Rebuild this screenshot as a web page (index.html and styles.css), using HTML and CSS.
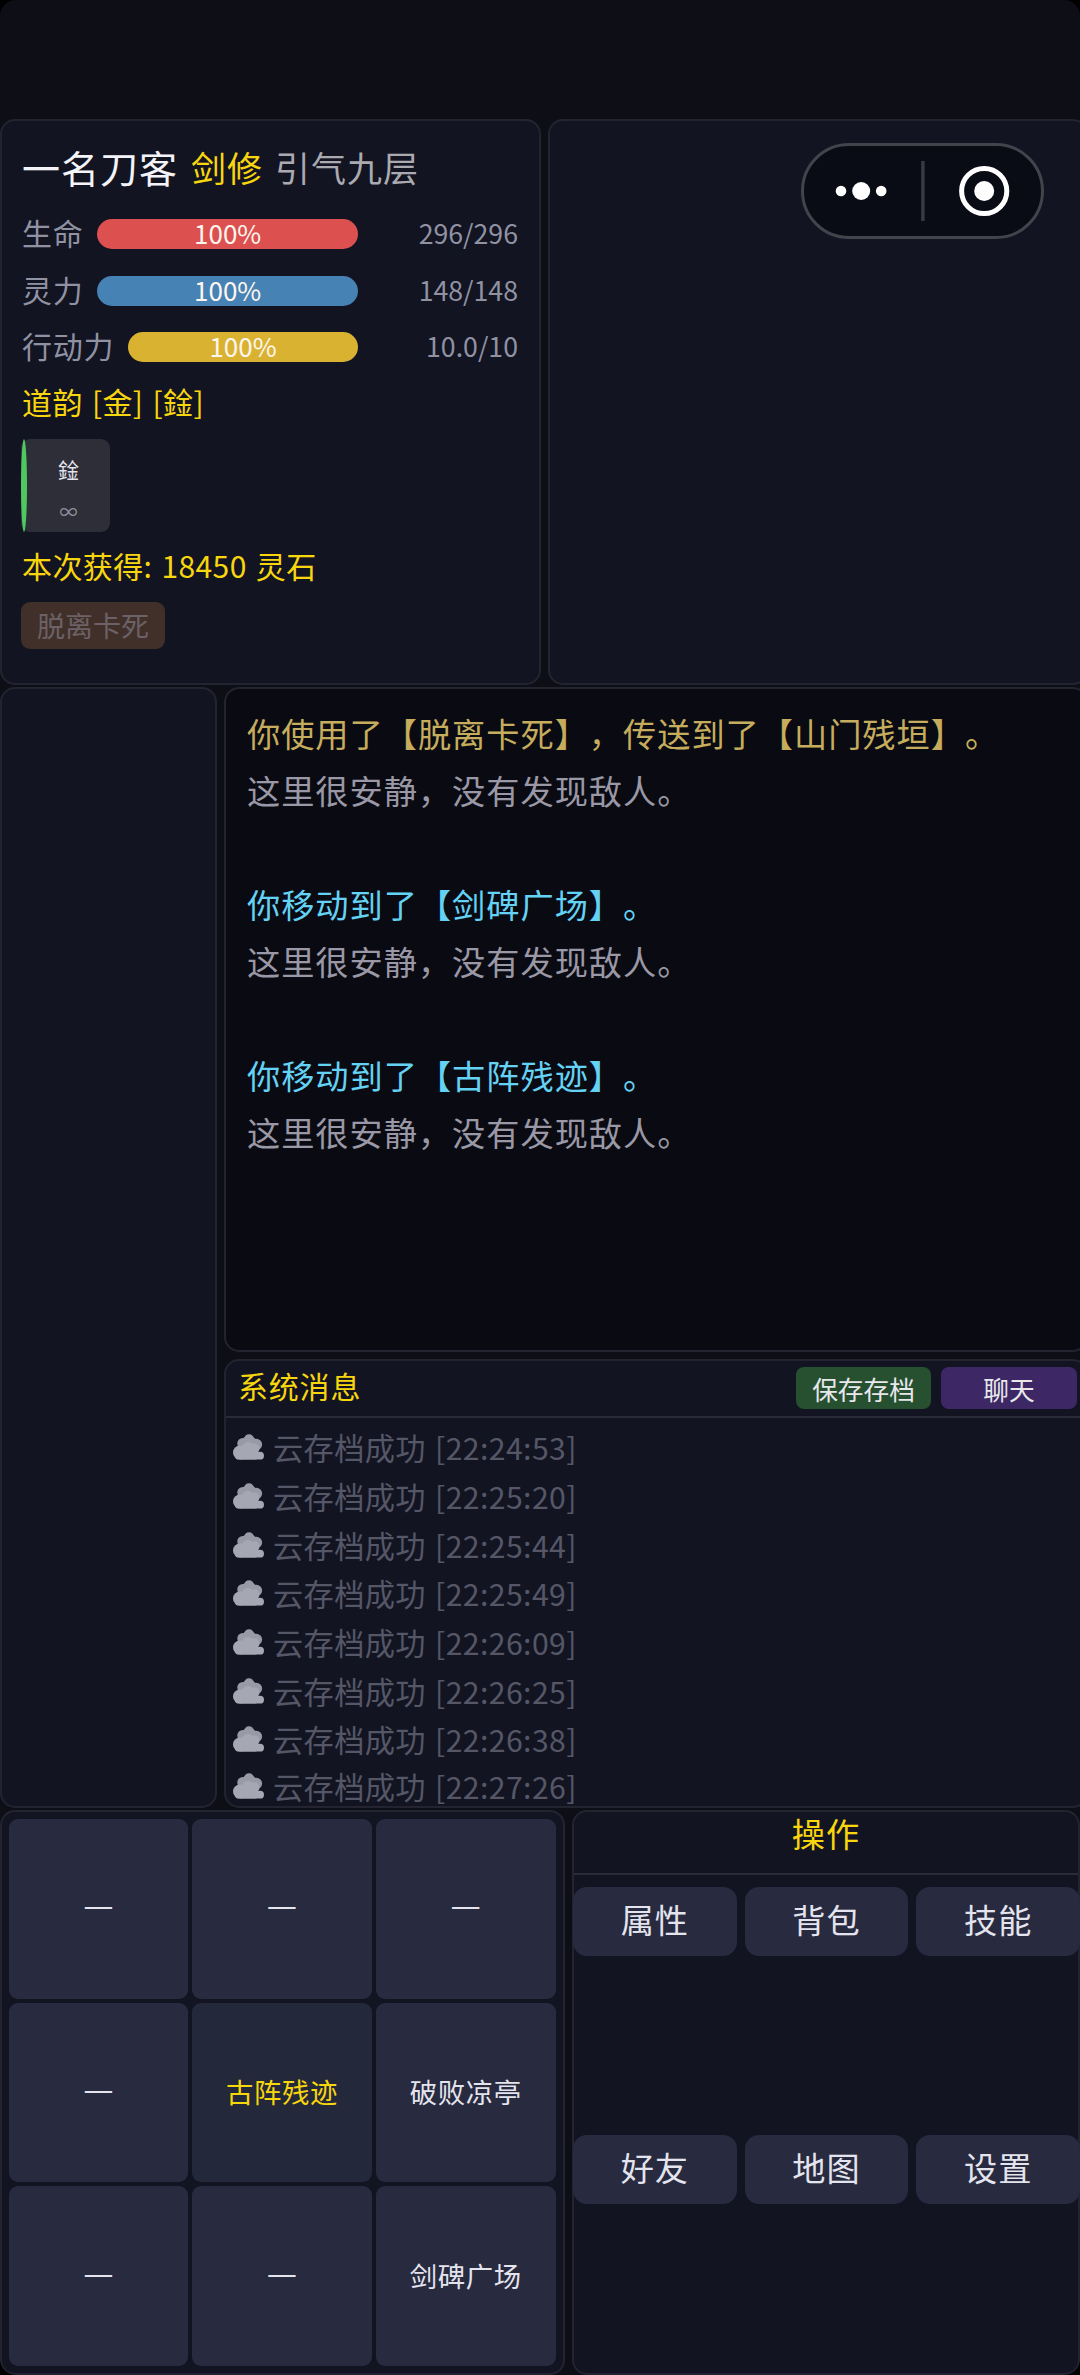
FILE: index.html
```html
<!DOCTYPE html>
<html lang="zh-CN">
<head>
<meta charset="utf-8">
<title>古阵残迹</title>
<link rel="stylesheet" href="styles.css">
</head>
<body>
<svg class="defs" aria-hidden="true">
  <symbol id="cloud" viewBox="0 0 31 26">
    <g fill="#989ba6"><circle cx="9.8" cy="9.5" r="5.5"/><circle cx="16" cy="5.2" r="5"/><circle cx="23.3" cy="10.5" r="5.8"/><circle cx="16" cy="10" r="8"/></g>
    <g fill="#a5a8b2"><circle cx="15" cy="14.5" r="6.5"/><circle cx="7" cy="18.5" r="7"/><circle cx="21.5" cy="14.5" r="5"/><rect x="5" y="13" width="20" height="12.5" rx="3"/><rect x="2" y="17.8" width="29" height="7.8" rx="3.9"/></g>
  </symbol>
</svg>
<div class="screen">
  <div class="row top-row">
    <section class="panel status">
      <div class="title"><span class="name">一名刀客</span><span class="job">剑修</span><span class="realm">引气九层</span></div>
      <div class="stat"><span class="label">生命</span><div class="bar hp">100%</div><span class="value">296/296</span></div>
      <div class="stat"><span class="label">灵力</span><div class="bar mp">100%</div><span class="value">148/148</span></div>
      <div class="stat"><span class="label">行动力</span><div class="bar ap">100%</div><span class="value">10.0/10</span></div>
      <div class="gold-line">道韵 [金] [鍂]</div>
      <div class="buff"><i class="buff-edge"></i><div class="buff-body"><span class="buff-name">鍂</span><span class="buff-time">∞</span></div></div>
      <div class="gold-line gain">本次获得: 18450 灵石</div>
      <button class="escape">脱离卡死</button>
    </section>
    <section class="panel enemy"></section>
  </div>
  <div class="row mid-row">
    <aside class="panel side"></aside>
    <div class="feed">
      <section class="panel log">
        <p class="use">你使用了【脱离卡死】，传送到了【山门残垣】。</p>
        <p>这里很安静，没有发现敌人。</p>
        <p class="blank"></p>
        <p class="move">你移动到了【剑碑广场】。</p>
        <p>这里很安静，没有发现敌人。</p>
        <p class="blank"></p>
        <p class="move">你移动到了【古阵残迹】。</p>
        <p>这里很安静，没有发现敌人。</p>
      </section>
      <section class="panel system">
        <header class="sys-head"><span class="sys-title">系统消息</span><button class="mini save">保存存档</button><button class="mini chat">聊天</button></header>
        <ul class="messages">
          <li><svg class="cloud"><use href="#cloud"/></svg>云存档成功 [22:24:53]</li>
          <li><svg class="cloud"><use href="#cloud"/></svg>云存档成功 [22:25:20]</li>
          <li><svg class="cloud"><use href="#cloud"/></svg>云存档成功 [22:25:44]</li>
          <li><svg class="cloud"><use href="#cloud"/></svg>云存档成功 [22:25:49]</li>
          <li><svg class="cloud"><use href="#cloud"/></svg>云存档成功 [22:26:09]</li>
          <li><svg class="cloud"><use href="#cloud"/></svg>云存档成功 [22:26:25]</li>
          <li><svg class="cloud"><use href="#cloud"/></svg>云存档成功 [22:26:38]</li>
          <li><svg class="cloud"><use href="#cloud"/></svg>云存档成功 [22:27:26]</li>
        </ul>
      </section>
    </div>
  </div>
  <div class="row bottom-row">
    <section class="panel map">
      <div class="cell empty">—</div><div class="cell empty">—</div><div class="cell empty">—</div>
      <div class="cell empty">—</div><div class="cell current">古阵残迹</div><div class="cell">破败凉亭</div>
      <div class="cell empty">—</div><div class="cell empty">—</div><div class="cell">剑碑广场</div>
    </section>
    <section class="panel ops">
      <h2 class="ops-title">操作</h2>
      <div class="ops-grid">
        <button class="op">属性</button><button class="op">背包</button><button class="op">技能</button>
        <button class="op">好友</button><button class="op">地图</button><button class="op">设置</button>
      </div>
    </section>
  </div>
  <svg class="capsule" viewBox="0 0 243 96">
    <rect x="1.5" y="1.5" width="240" height="93" rx="46.5" fill="#090c15" stroke="#42434b" stroke-width="3"/>
    <g fill="#fff"><circle cx="40" cy="48" r="5.3"/><circle cx="60.2" cy="48" r="9"/><circle cx="80.2" cy="48" r="5.3"/><circle cx="183.2" cy="48" r="10"/></g>
    <rect x="120.2" y="18" width="3.4" height="60" fill="#393b44"/>
    <circle cx="183.2" cy="48" r="22.6" fill="none" stroke="#fff" stroke-width="5"/>
  </svg>
</div>
</body>
</html>
```
FILE: styles.css
```css
* { box-sizing: border-box; }
html { background: #000; }
body { margin: 0; font-family: "Noto Sans CJK SC", "Noto Sans CJK TC", sans-serif; color: #e4e4ee; text-spacing-trim: space-all; }
button { border: 0; padding: 0; font-family: inherit; color: inherit; }
p, h2, ul { margin: 0; padding: 0; font-weight: 400; }
.defs { display: none; }
.screen { position: relative; width: 1080px; height: 2375px; padding-top: 119px; overflow: hidden; background: #0e0e16; border-radius: 16px; }
.row { display: flex; }
.panel { background: #121422; border: 2px solid #23242f; border-radius: 15px; }

/* character status */
.top-row { width: 1088px; height: 566px; gap: 7px; margin-bottom: 2px; }
.status { width: 541px; padding: 19px 20px 0 19px; }
.enemy { flex: 1; }
.title { display: flex; align-items: center; gap: 13px; height: 54px; padding-left: 1px; white-space: nowrap; }
.name { font-size: 38px; letter-spacing: 1px; line-height: 54px; color: #f4f4f8; }
.job { font-size: 35px; letter-spacing: 1px; line-height: 54px; color: #f8d60e; }
.realm { font-size: 35px; letter-spacing: 1px; line-height: 54px; color: #aaaab0; margin-left: -1px; }
.stat { display: flex; align-items: center; height: 56.7px; }
.title + .stat { margin-top: 11.5px; }
.label { font-size: 30px; letter-spacing: .7px; line-height: 48px; color: #9092a2; margin-right: 14px; padding: 0 0 4px 1px; }
.bar { flex: 1; height: 30px; border-radius: 15px; font-size: 26px; line-height: 28px; text-align: center; color: #fdf6ee; }
.hp { background: #dc504f; }
.mp { background: #4682b4; }
.ap { background: #dab232; }
.value { width: 161px; padding: 0 1px 2px 0; font-size: 26.7px; line-height: 40px; text-align: right; color: #9092a2; }
.gold-line { padding-left: 1px; font-size: 30px; letter-spacing: .4px; word-spacing: 2px; line-height: 46px; height: 46px; color: #f8d60e; margin-top: 2.5px; }
.buff { display: flex; width: 89px; height: 93px; margin-top: 15px; border-radius: 9px; background: #2e2e38; }
.buff-edge { width: 6px; border-radius: 50%; background: #50c860; }
.buff-body { flex: 1; display: flex; flex-direction: column; align-items: center; }
.buff-name { font-size: 21px; line-height: 30px; margin-top: 15px; color: #e4e4ee; }
.buff-time { font-size: 18px; line-height: 20px; margin-top: 17px; color: #8e8e9c; }
.gain { margin-top: 10px; }
.escape { display: block; margin-top: 14px; width: 144px; height: 47px; border-radius: 9px; background: #413029; color: #6b6167; font-size: 28px; line-height: 43px; }

/* adventure log and system messages */
.mid-row { width: 1088px; height: 1121px; gap: 7px; margin-bottom: 2px; }
.side { width: 217px; }
.feed { flex: 1; display: flex; flex-direction: column; gap: 7px; }
.log { height: 665px; flex: none; background: #0a0b12; padding: 14.5px 20px 0 21px; }
.log p { height: 57.1px; font-size: 33.2px; letter-spacing: 1px; line-height: 57px; color: #9a98a6; white-space: nowrap; }
.log p.use { color: #c6ad5e; }
.log p.move { color: #64d2f4; }
.system { flex: 1; min-height: 0; }
.sys-head { display: flex; align-items: center; gap: 10px; height: 57px; padding: 0 9px 1px 12px; border-bottom: 2px solid #2a2b38; }
.sys-title { flex: 1; padding-bottom: 7px; font-size: 30px; letter-spacing: .8px; line-height: 44px; color: #f8d60e; }
.mini { width: 136px; height: 42px; border-radius: 8px; font-size: 25.7px; line-height: 37px; color: #e8e8ec; }
.save { width: 135px; background: #275030; }
.chat { background: #3d2865; }
.messages { list-style: none; padding: 5px 0 0 7px; }
.messages li { display: flex; align-items: center; height: 48.7px; font-size: 30.2px; letter-spacing: .4px; word-spacing: 2px; line-height: 30px; color: #555767; white-space: pre; }
.messages li:last-child { height: 44px; padding-bottom: 0; }
.cloud { width: 31px; height: 26px; margin-right: 9px; }

/* map and actions */
.bottom-row { width: 1080px; height: 565px; gap: 7px; }
.map { width: 565px; padding: 7px 7.5px 7px 6.5px; display: grid; grid-template-columns: repeat(3, 1fr); grid-template-rows: repeat(3, 1fr); gap: 4px; }
.cell { display: flex; align-items: center; justify-content: center; border-radius: 9px; background: #282a40; font-size: 27.4px; letter-spacing: .6px; line-height: 40px; padding-bottom: 2px; }
.empty { font-size: 34px; letter-spacing: 0; padding-bottom: 9px; }
.current { background: #23293b; color: #f8d60e; }
.ops { flex: 1; }
.ops-title { height: 63px; border-bottom: 2px solid #2a2b38; text-align: center; font-size: 33.2px; letter-spacing: 1px; line-height: 42px; color: #f8d60e; }
.ops-grid { display: grid; grid-template-columns: repeat(3, 1fr); grid-template-rows: 248px 248px; align-items: start; gap: 0 8px; margin: 0 -2px 0 -1px; padding-top: 12px; }
.op { height: 69px; padding-bottom: 6px; border-radius: 14px; background: #282a40; font-size: 33.2px; letter-spacing: 1px; line-height: 60px; }

.capsule { position: absolute; left: 801px; top: 143px; width: 243px; height: 96px; }
```
